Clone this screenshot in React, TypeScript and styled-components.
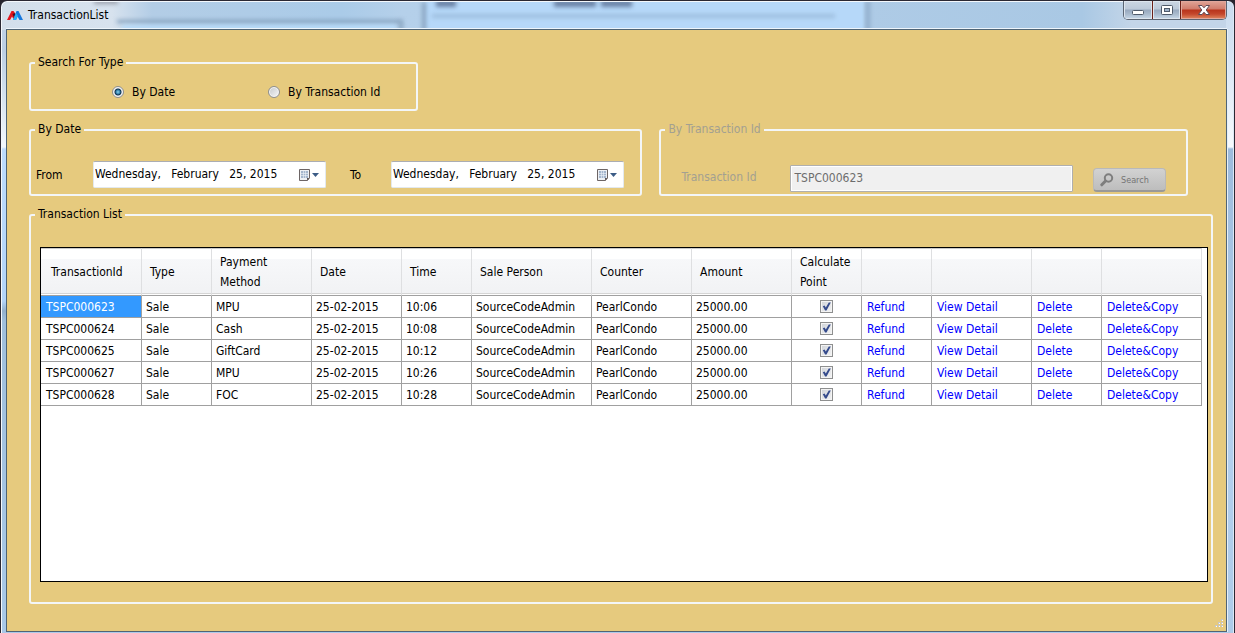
import React from "react";
import styled, { createGlobalStyle } from "styled-components";

const Global = createGlobalStyle`
  * { box-sizing: border-box; }
  body {
    margin: 0;
    background: #26242e;
    color: #000;
    font-family: "DejaVu Sans Condensed", "DejaVu Sans", sans-serif;
    font-size: 12px;
    line-height: 18px;
  }
  button, input { font-family: inherit; font-size: inherit; }
`;

const Window = styled.div`
  position: relative;
  display: flex;
  flex-direction: column;
  min-height: 100vh;
  padding: 0 7px 1px 5px;
  border: 1px solid #2a2833;
  border-width: 1px 1px 0 1px;
  border-radius: 7px 7px 0 0;
  box-shadow: inset 1px 1px 0 #f4f8fc, inset -1px 0 0 #dce9f5;
  background:
    linear-gradient(180deg, #c4d5e9 0, #bccfe4 50px, #f2f8fd 146px, #bddcfd 148px, #b3d4f8 300px, #93b0cc 310px, #a0bfdc 320px, #a9c9e8 100%) left / 20px 100% no-repeat,
    linear-gradient(180deg, #c9dbee 0, #d5e4f3 50px, #f7fafd 146px, #9dbbdc 148px, #b3d0ee 420px, #aecbe9 100%);
`;

const Glass = styled.div`
  position: absolute;
  inset: 1px 8px auto 1px;
  height: 28px;
  overflow: hidden;
  border-radius: 6px 0 0 0;
  background: linear-gradient(90deg, #d3dfeb 0, #d7e2ee 110px, #b3cde6 150px, #aacbe8 340px, #b5d0ea 400px, #aecbe6 865px, #a9c8e4 1080px, #c3d5e8 1130px);
`;

const Haze = styled.div<{ $x: number; $y: number; $w: number; $h: number; $c: string; $b?: number }>`
  position: absolute;
  left: ${(p) => p.$x}px;
  top: ${(p) => p.$y}px;
  width: ${(p) => p.$w}px;
  height: ${(p) => p.$h}px;
  background: ${(p) => p.$c};
  filter: blur(${(p) => p.$b ?? 2}px);
`;

const TitleBar = styled.header`
  position: relative;
  display: flex;
  align-items: center;
  height: 28px;
  gap: 5px;
`;

const Title = styled.h1`
  margin: 0;
  flex: 1;
  font-size: 12px;
  font-weight: 400;
  line-height: 18px;
`;

const Controls = styled.div`
  display: flex;
  align-self: flex-start;
  height: 19px;
  border: 1px solid #5b6573;
  border-top: 0;
  border-radius: 0 0 5px 5px;
  overflow: hidden;
`;

const ControlButton = styled.button<{ $close?: boolean }>`
  display: flex;
  align-items: center;
  justify-content: center;
  width: ${(p) => (p.$close ? 46 : 28)}px;
  padding: 0;
  border: 0;
  box-shadow: inset 0 0 0 1px ${(p) => (p.$close ? "#e0a79c" : "#dde5ee")};
  background: ${(p) =>
    p.$close
      ? "linear-gradient(180deg, #e0a598 0, #d07c6c 8px, #b8341c 9px, #c4472c 13px, #e08a62 100%)"
      : "linear-gradient(180deg, #cbd6e3 0, #bcc9d9 8px, #98a9bf 9px, #a9bacd 13px, #c8d9e9 100%)"};
  & + & { border-left: 1px solid ${(p) => (p.$close ? "#6b2018" : "#5f6b7b")}; }
`;

const Client = styled.main`
  flex: 1;
  display: flex;
  flex-direction: column;
  position: relative;
  padding: 23px 13px 27px 22px;
  border: 1px solid #4f6475;
  box-shadow: 0 -1px 0 #eef5fb, 1px 0 0 #e6f0f9;
  background: #e6ca7e;
`;

const Group = styled.fieldset<{ $disabled?: boolean }>`
  min-width: 0;
  margin: 0;
  padding: 0;
  border: 2px solid #f3f6f8;
  border-radius: 3px;
  color: ${(p) => (p.$disabled ? "#a3a091" : "#000")};
`;

const Legend = styled.legend`
  margin-left: 4px;
  padding: 0 3px 2px;
  line-height: 18px;
`;

const TypeGroup = styled(Group)`
  width: 389px;
  max-width: 100%;
  height: 58px;
`;

const TypeOptions = styled.div`
  display: flex;
  gap: 93px;
  padding: 10px 0 0 81px;
`;

const RadioLabel = styled.label`
  display: flex;
  align-items: center;
  gap: 8px;
`;

const Radio = styled.input`
  appearance: none;
  width: 12px;
  height: 12px;
  margin: 0;
  border: 1px solid #8e8f8f;
  border-radius: 50%;
  box-shadow: inset 0 0 0 1px #f6f6f6;
  background: linear-gradient(135deg, #c4c8cc, #f8f8f8);
  &:checked {
    background: radial-gradient(circle at 5px 5px, #8fd4f0 0, #2f7ea8 2px, #0e2f4c 3px, #13304a 3px, #e4e8ea 4px);
  }
`;

const Filters = styled.div`
  display: grid;
  grid-template-columns: 614fr 529fr;
  gap: 17px;
  margin: 9px 25px 9px 0;
`;

const FilterGroup = styled(Group)`
  height: 76px;
`;

const DateRow = styled.div`
  display: flex;
  align-items: center;
  padding: 21px 16px 0 5px;
`;

const FieldLabel = styled.label<{ $w: number }>`
  width: ${(p) => p.$w}px;
`;

const DatePicker = styled.div<{ $gap?: number }>`
  display: flex;
  align-items: center;
  width: 233px;
  height: 27px;
  margin-right: ${(p) => p.$gap ?? 0}px;
  padding: 0 5px 0 1px;
  border: 1px solid #e3e9ef;
  border-top-color: #abadb3;
  border-radius: 2px;
  background: #fff;
`;

const DateInput = styled.input`
  flex: 1;
  min-width: 0;
  padding: 0 0 2px;
  border: 0;
  outline: 0;
  background: transparent;
  color: #000;
  white-space: pre;
`;

const DropButton = styled.button`
  display: flex;
  padding: 0;
  border: 0;
  background: none;
`;

const IdRow = styled.div`
  display: flex;
  align-items: flex-start;
  padding: 25px 20px 0 20px;
`;

const IdLabel = styled(FieldLabel)`
  padding-top: 3px;
`;

const IdInput = styled.input`
  flex: 1;
  min-width: 0;
  height: 27px;
  padding: 0 3px 2px;
  border: 1px solid #afafaf;
  border-radius: 1px;
  box-shadow: inset 0 0 0 1px #fff;
  background: #f0f0f0;
  color: #6d6d6d;
`;

const SearchButton = styled.button`
  display: flex;
  align-items: center;
  gap: 7px;
  width: 73px;
  height: 24px;
  margin: 3px 0 0 20px;
  padding: 0 6px;
  border: 1px solid #b9b9b9;
  border-bottom: 2px solid #999;
  border-radius: 4px;
  background: linear-gradient(180deg, #d2d2d2, #bdbdbd);
  color: #747474;
  font-size: 9px;
`;

const ListGroup = styled(Group)`
  flex: 1;
`;

const Grid = styled.div`
  height: calc(100vh - 298px);
  min-height: 200px;
  margin: 22px 3px 20px 9px;
  border: 1px solid #000;
  background: #fff;
  overflow: hidden;
`;

const Table = styled.table`
  width: 1161px;
  table-layout: fixed;
  border-spacing: 0;
`;

const Th = styled.th`
  height: 48px;
  padding: 0 8px;
  border-top: 1px solid #c9c9c9;
  border-right: 1px solid #dedfe1;
  border-bottom: 1px solid #a0a0a0;
  box-shadow: inset 0 -1px 0 #fff, inset 0 -2px 0 #d5d5d5;
  background: linear-gradient(180deg, #fff 0, #fff 10px, #f7f8fa 10px, #f1f2f4 100%);
  font-weight: 400;
  line-height: 20px;
  text-align: left;
  &:first-child { padding-left: 10px; }
`;

const Td = styled.td<{ $selected?: boolean; $center?: boolean }>`
  height: 22px;
  padding: 0 4px;
  border-right: 1px solid #a0a0a0;
  border-bottom: 1px solid #a0a0a0;
  background: ${(p) => (p.$selected ? "#3399ff" : "#fff")};
  color: ${(p) => (p.$selected ? "#fff" : "#000")};
  text-align: ${(p) => (p.$center ? "center" : "left")};
  white-space: nowrap;
  &:first-child, &:nth-child(n + 10) { padding-left: 5px; }
`;

const Check = styled.input`
  appearance: none;
  display: block;
  width: 13px;
  height: 13px;
  margin: 0 auto;
  border: 1px solid #8e8f8f;
  background: linear-gradient(135deg, #cfd3d8, #f4f4f4);
  box-shadow: inset 0 0 0 1px #f4f4f4;
  &:checked {
    background: url("data:image/svg+xml,%3Csvg xmlns='http://www.w3.org/2000/svg' viewBox='0 0 11 11'%3E%3Cpath d='M1.800 5.200 3.600 4.400 4.800 6.600 7.800 1.400H9.800L5.500 9.600H4.100Z' fill='%23354b8c'/%3E%3C/svg%3E"),
      linear-gradient(135deg, #cfd3d8, #f4f4f4);
  }
`;

const Link = styled.a`
  color: #0000ff;
  text-decoration: none;
`;

const SizeGrip = styled.svg`
  position: absolute;
  right: 2px;
  bottom: 2px;
`;

const columns: [string, number][] = [
  ["TransactionId", 101],
  ["Type", 70],
  ["Payment Method", 100],
  ["Date", 90],
  ["Time", 70],
  ["Sale Person", 120],
  ["Counter", 100],
  ["Amount", 100],
  ["Calculate Point", 70],
  ["", 70],
  ["", 100],
  ["", 70],
  ["", 100],
];

const transactions = [
  { id: "TSPC000623", method: "MPU", time: "10:06" },
  { id: "TSPC000624", method: "Cash", time: "10:08" },
  { id: "TSPC000625", method: "GiftCard", time: "10:12" },
  { id: "TSPC000627", method: "MPU", time: "10:26" },
  { id: "TSPC000628", method: "FOC", time: "10:28" },
];

const actions = ["Refund", "View Detail", "Delete", "Delete&Copy"];

const Logo = () => (
  <svg width="17" height="12" viewBox="0 0 17 12" aria-hidden="true">
    <path d="M1 11 5.500 2H7.500L10 5.500 7.500 10 6 7.500 4 11Z" fill="#e0141c" />
    <path d="M6.500 5 8.500 4 9.500 6 8 8.500Z" fill="#4a1020" />
    <path d="M7 11 10.500 2H12.500L17 11H13.500L11.500 7.500 10 11Z" fill="#1878dc" />
    <path d="M7 11 10 4 12 7 10 11Z" fill="#25b0f8" />
  </svg>
);

const CalendarIcon = () => (
  <svg width="22" height="14" viewBox="0 0 22 14" aria-hidden="true">
    <path d="M1.500 1.500H11.500V10L9.500 12.500H1.500Z" fill="#eef1f5" stroke="#6d6565" />
    <path d="M3 3H10V10H3Z" fill="#a4b6cd" />
    <path d="M3 5.500H10M3 7.500H10M5.500 3V10M7.500 3V10" stroke="#eef3f8" strokeWidth=".6" />
    <path d="M9 12.500V10H11.500Z" fill="#5d5555" />
    <path d="M14 5H21L17.500 9Z" fill="#3c5c86" />
  </svg>
);

const DateField = ({ id, gap }: { id: string; gap?: number }) => (
  <DatePicker $gap={gap}>
    <DateInput id={id} defaultValue={"Wednesday,   February   25, 2015"} />
    <DropButton type="button" aria-label="Open calendar">
      <CalendarIcon />
    </DropButton>
  </DatePicker>
);

export default function App() {
  return (
    <>
      <Global />
      <Window>
        <Glass aria-hidden="true">
          <Haze $x={115} $y={18} $w={284} $h={3} $c="#7f9cb9" />
          <Haze $x={397} $y={18} $w={4} $h={14} $c="#8aa5c0" />
          <Haze $x={120} $y={23} $w={274} $h={8} $c="#b7daf8" />
          <Haze $x={92} $y={-3} $w={24} $h={5} $c="#9aa0ac" />
          <Haze $x={424} $y={-2} $w={438} $h={34} $c="#b6d8f9" $b={1} />
          <Haze $x={420} $y={0} $w={4} $h={30} $c="#86a4c2" />
          <Haze $x={430} $y={12} $w={403} $h={4} $c="#9dbddd" />
          <Haze $x={434} $y={-2} $w={20} $h={7} $c="#6b83a6" />
          <Haze $x={552} $y={-2} $w={42} $h={7} $c="#6b83a6" />
          <Haze $x={599} $y={-2} $w={31} $h={7} $c="#6b83a6" />
          <Haze $x={864} $y={-2} $w={4} $h={34} $c="#8eabca" />
        </Glass>
        <TitleBar>
          <Logo />
          <Title>TransactionList</Title>
          <Controls>
            <ControlButton type="button" aria-label="Minimize">
              <svg width="14" height="12" viewBox="0 0 14 12">
                <rect x="1.500" y="6.500" width="11" height="4" rx="1" fill="#fff" stroke="#4f5a6a" />
              </svg>
            </ControlButton>
            <ControlButton type="button" aria-label="Maximize">
              <svg width="14" height="12" viewBox="0 0 14 12">
                <rect x="1.500" y="1.500" width="11" height="9" rx="1" fill="#fff" stroke="#4f5a6a" />
                <rect x="4.500" y="4.500" width="5" height="3" fill="#9fb2c9" stroke="#4f5a6a" />
              </svg>
            </ControlButton>
            <ControlButton type="button" aria-label="Close" $close>
              <svg width="14" height="12" viewBox="0 0 14 12">
                <path
                  d="M1.500 1.500H5L7 3.800 9 1.500H12.500L9.200 6 12.500 10.500H9L7 8.200 5 10.500H1.500L4.800 6Z"
                  fill="#fff"
                  stroke="#5c4a55"
                  strokeLinejoin="round"
                />
              </svg>
            </ControlButton>
          </Controls>
        </TitleBar>

        <Client>
          <TypeGroup>
            <Legend>Search For Type</Legend>
            <TypeOptions>
              <RadioLabel>
                <Radio type="radio" name="searchType" defaultChecked />
                By Date
              </RadioLabel>
              <RadioLabel>
                <Radio type="radio" name="searchType" />
                By Transaction Id
              </RadioLabel>
            </TypeOptions>
          </TypeGroup>

          <Filters>
            <FilterGroup>
              <Legend>By Date</Legend>
              <DateRow>
                <FieldLabel htmlFor="from" $w={57}>From</FieldLabel>
                <DateField id="from" gap={24} />
                <FieldLabel htmlFor="to" $w={41}>To</FieldLabel>
                <DateField id="to" />
              </DateRow>
            </FilterGroup>
            <FilterGroup disabled $disabled>
              <Legend>By Transaction Id</Legend>
              <IdRow>
                <IdLabel htmlFor="transactionId" $w={109}>Transaction Id</IdLabel>
                <IdInput id="transactionId" defaultValue="TSPC000623" />
                <SearchButton type="button">
                  <svg width="14" height="14" viewBox="0 0 14 14" aria-hidden="true">
                    <circle cx="8.500" cy="5" r="3.700" fill="none" stroke="#7e7e7e" strokeWidth="2" />
                    <path d="M5.500 8 1.800 11.800" stroke="#7e7e7e" strokeWidth="3" strokeLinecap="round" />
                  </svg>
                  Search
                </SearchButton>
              </IdRow>
            </FilterGroup>
          </Filters>

          <ListGroup>
            <Legend>Transaction List</Legend>
            <Grid>
              <Table>
                <colgroup>
                  {columns.map(([, w], i) => (
                    <col key={i} width={w} />
                  ))}
                </colgroup>
                <thead>
                  <tr>
                    {columns.map(([name], i) => (
                      <Th key={i}>{name}</Th>
                    ))}
                  </tr>
                </thead>
                <tbody>
                  {transactions.map((t, i) => (
                    <tr key={t.id}>
                      <Td $selected={i === 0}>{t.id}</Td>
                      <Td>Sale</Td>
                      <Td>{t.method}</Td>
                      <Td>25-02-2015</Td>
                      <Td>{t.time}</Td>
                      <Td>SourceCodeAdmin</Td>
                      <Td>PearlCondo</Td>
                      <Td>25000.00</Td>
                      <Td $center>
                        <Check type="checkbox" defaultChecked aria-label={`Calculate point for ${t.id}`} />
                      </Td>
                      {actions.map((a) => (
                        <Td key={a}>
                          <Link href="#">{a}</Link>
                        </Td>
                      ))}
                    </tr>
                  ))}
                </tbody>
              </Table>
            </Grid>
          </ListGroup>
          <SizeGrip width="10" height="10" viewBox="0 0 10 10" aria-hidden="true">
            <path d="M7 0h2v2h-2zM4 3h2v2h-2zM7 3h2v2h-2zM1 6h2v2h-2zM4 6h2v2h-2zM7 6h2v2h-2z" fill="#c3c6cc" />
            <path d="M8 1h1v1h-1zM5 4h1v1h-1zM8 4h1v1h-1zM2 7h1v1h-1zM5 7h1v1h-1zM8 7h1v1h-1z" fill="#fff" />
          </SizeGrip>
        </Client>
      </Window>
    </>
  );
}
